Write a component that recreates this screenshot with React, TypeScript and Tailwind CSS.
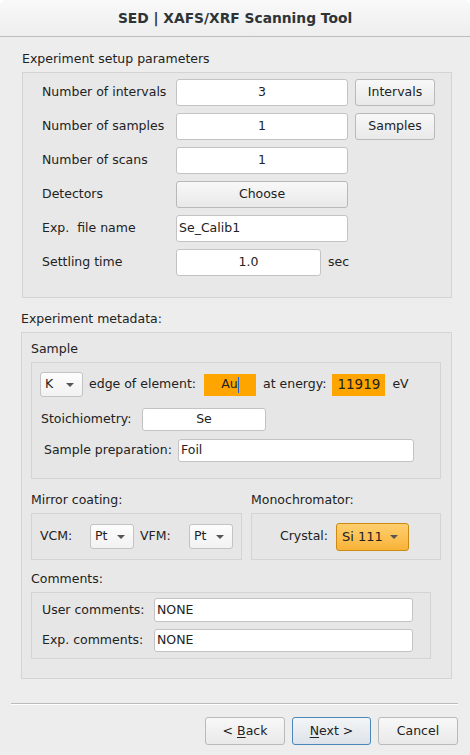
import { ReactNode } from "react";

const Field = ({ children, w, h = 27, align = "center" }: { children?: ReactNode; w: number; h?: number; align?: "center" | "left" }) => (
  <div
    style={{ width: w, height: h }}
    className={`flex shrink-0 items-center rounded-[3px] border border-[#c3c3c3] bg-white ${
      align === "center" ? "justify-center" : "justify-start pl-[2px]"
    }`}
  >
    {children}
  </div>
);

const Btn = ({ children, w, h = 27, primary = false }: { children: ReactNode; w: number; h?: number; primary?: boolean }) => (
  <div
    style={{ width: w, height: h }}
    className={`flex shrink-0 items-center justify-center whitespace-pre rounded-[3px] border bg-linear-to-b ${
      primary
        ? "border-[#4a86b8] from-[#f3f5f7] to-[#dde3e9]"
        : "border-[#b9b9b9] from-[#f8f8f8] to-[#e9e9e9]"
    }`}
  >
    {children}
  </div>
);

const Caret = () => (
  <svg width="8" height="4" viewBox="0 0 8 4" className="shrink-0">
    <path d="M0 0h8L4 4z" fill="#555" />
  </svg>
);

const Combo = ({ value, w }: { value: string; w: number }) => (
  <div
    style={{ width: w }}
    className="flex h-[25px] shrink-0 items-center justify-between rounded-[3px] border border-[#c3c3c3] bg-linear-to-b from-[#fdfdfd] to-[#f2f2f2] pl-[4px] pr-[8px]"
  >
    <span>{value}</span>
    <Caret />
  </div>
);

const Row = ({ label, children }: { label: string; children: ReactNode }) => (
  <div className="flex h-[27px] items-center">
    <span className="w-[134px] shrink-0 whitespace-pre">{label}</span>
    {children}
  </div>
);

export default function App() {
  return (
    <div className="h-[755px] w-[470px] overflow-hidden bg-white font-['DejaVu_Sans',sans-serif] text-[12.5px] text-[#222]">
      <div className="h-full rounded-t-[7px] bg-[#ededed]">
        {/* Title bar */}
        <header className="flex h-[37px] items-center justify-center rounded-t-[7px] border-b border-[#bdbdbd] bg-linear-to-b from-[#f9f9f9] to-[#eeeeee] text-[13.8px] font-bold text-[#2e3436]">
          SED | XAFS/XRF Scanning Tool
        </header>

        {/* Setup parameters */}
        <p className="ml-[22px] mt-[14px] h-[16px] leading-[16px]">Experiment setup parameters</p>
        <div className="ml-[22px] mt-[5px] flex h-[226px] w-[430px] flex-col gap-[7px] border border-[#d4d4d4] bg-[#e8e8e8] pl-[19px] pt-[6px]">
          <Row label="Number of intervals">
            <Field w={172}>3</Field>
            <div className="ml-[7px]">
              <Btn w={80}>Intervals</Btn>
            </div>
          </Row>
          <Row label="Number of samples">
            <Field w={172}>1</Field>
            <div className="ml-[7px]">
              <Btn w={80}>Samples</Btn>
            </div>
          </Row>
          <Row label="Number of scans">
            <Field w={172}>1</Field>
          </Row>
          <Row label="Detectors">
            <Btn w={172}>Choose</Btn>
          </Row>
          <Row label="Exp.  file name">
            <Field w={172} align="left">
              Se_Calib1
            </Field>
          </Row>
          <Row label="Settling time">
            <Field w={145}>1.0</Field>
            <span className="ml-[7px]">sec</span>
          </Row>
        </div>

        {/* Metadata */}
        <p className="ml-[21px] mt-[13px] h-[16px] leading-[16px]">Experiment metadata:</p>
        <div className="ml-[21px] mt-[5px] h-[347px] w-[431px] border border-[#d4d4d4] bg-[#e8e8e8] pl-[9px]">
          <p className="mt-[8px] h-[16px] leading-[16px]">Sample</p>
          <div className="mt-[5px] h-[117px] w-[410px] border border-[#d4d4d4] bg-[#e6e6e6] pl-[8px] pt-[9px]">
            <div className="flex h-[25px] items-center">
              <Combo value="K" w={43} />
              <span className="ml-[6px]">edge of element:</span>
              <div className="ml-[8px] flex h-[22px] w-[52px] items-center justify-center bg-[#ffa500]">
                <span>Au</span>
                <span className="h-[16px] w-px bg-[#1c5fd6]" />
              </div>
              <span className="ml-[7px]">at energy:</span>
              <div className="ml-[6px] flex h-[22px] w-[53px] items-center justify-center bg-[#ffa500] text-[13.5px]">
                11919
              </div>
              <span className="ml-[7px]">eV</span>
            </div>
            <div className="mt-[11px] flex h-[23px] items-center">
              <span className="ml-px w-[101px]">Stoichiometry:</span>
              <Field w={124} h={23}>
                Se
              </Field>
            </div>
            <div className="mt-[8px] flex h-[23px] items-center">
              <span className="ml-[4px] w-[134px]">Sample preparation:</span>
              <Field w={236} h={23} align="left">
                Foil
              </Field>
            </div>
          </div>

          <div className="mt-[13px] flex gap-[9px]">
            <div>
              <p className="h-[16px] leading-[16px]">Mirror coating:</p>
              <div className="mt-[5px] flex h-[47px] w-[211px] items-center border border-[#d4d4d4] bg-[#e6e6e6] pl-[8px]">
                <span className="w-[50px]">VCM:</span>
                <Combo value="Pt" w={44} />
                <span className="ml-[6px] w-[49px]">VFM:</span>
                <Combo value="Pt" w={44} />
              </div>
            </div>
            <div>
              <p className="h-[16px] leading-[16px]">Monochromator:</p>
              <div className="mt-[5px] flex h-[47px] w-[190px] items-center border border-[#d4d4d4] bg-[#e6e6e6] pl-[28px]">
                <span className="w-[56px]">Crystal:</span>
                <div className="flex h-[28px] w-[73px] items-center justify-between rounded-[3px] border border-[#cc8a12] bg-linear-to-b from-[#ffcf6e] to-[#f8b336] pl-[5px] pr-[10px] text-[13px]">
                  <span>Si 111</span>
                  <Caret />
                </div>
              </div>
            </div>
          </div>

          <p className="mt-[11px] h-[16px] leading-[16px]">Comments:</p>
          <div className="mt-[5px] flex h-[67px] w-[400px] flex-col gap-[7px] border border-[#d4d4d4] bg-[#e6e6e6] pl-[10px] pt-[5px]">
            <div className="flex h-[24px] items-center">
              <span className="w-[112px]">User comments:</span>
              <Field w={259} h={24} align="left">
                NONE
              </Field>
            </div>
            <div className="flex h-[23px] items-center">
              <span className="w-[112px]">Exp. comments:</span>
              <Field w={259} h={23} align="left">
                NONE
              </Field>
            </div>
          </div>
        </div>

        {/* Footer */}
        <div className="ml-[11px] mt-[24px] h-[2px] w-[447px] border-t border-b border-t-[#bcbcbc] border-b-white" />
        <div className="mr-[12px] mt-[12px] flex justify-end gap-[7px]">
          <Btn w={80} h={28}>
            {"< "}
            <u className="decoration-1 underline-offset-2">B</u>
            {"ack"}
          </Btn>
          <Btn w={79} h={28} primary>
            <u className="decoration-1 underline-offset-2">N</u>
            {"ext >"}
          </Btn>
          <Btn w={80} h={28}>
            Cancel
          </Btn>
        </div>
      </div>
    </div>
  );
}
